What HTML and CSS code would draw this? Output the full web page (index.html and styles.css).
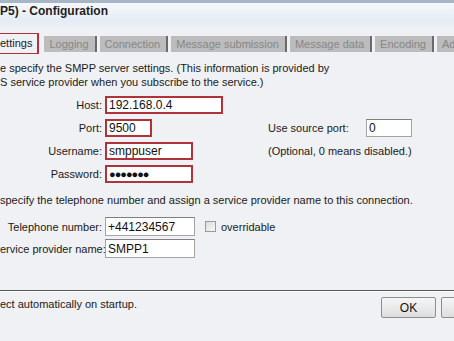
FILE: index.html
```html
<!DOCTYPE html>
<html>
<head>
<title>SMPP Configuration</title>
<link rel="stylesheet" href="styles.css">
</head>
<body>
  <div id="frame">
    <div id="titlebar">P5) - Configuration</div>
    <div id="tabs">
      <span class="tab active">ettings</span>
      <span class="tab">Logging</span>
      <span class="tab">Connection</span>
      <span class="tab">Message submission</span>
      <span class="tab">Message data</span>
      <span class="tab">Encoding</span>
      <span class="tab">Ad</span>
    </div>
    <div id="panel">
      <p class="intro">e specify the SMPP server settings. (This information is provided by<br/>
      S service provider when you subscribe to the service.)</p>
      <div class="form server">
        <label class="lbl">Host:</label>
        <div class="field"><input type="text" class="marked w-host" value="192.168.0.4"/></div>
        <span></span><span></span>

        <label class="lbl">Port:</label>
        <div class="field"><input type="text" class="marked w-port" value="9500"/></div>
        <label class="lbl2">Use source port:</label>
        <div class="field"><input type="text" class="w-src" value="0"/></div>

        <label class="lbl">Username:</label>
        <div class="field"><input type="text" class="marked w-user" value="smppuser"/></div>
        <span class="note">(Optional, 0 means disabled.)</span>

        <label class="lbl">Password:</label>
        <div class="field"><input type="text" class="marked w-user pass" value="&#9679;&#9679;&#9679;&#9679;&#9679;&#9679;&#9679;"/></div>
        <span></span><span></span>
      </div>
      <p class="intro second">specify the telephone number and assign a service provider name to this connection.</p>
      <div class="form phone">
        <label class="lbl">Telephone number:</label>
        <div class="field"><input type="text" class="w-tel" value="+441234567"/>
          <span class="check"><span class="box"></span>overridable</span>
        </div>
        <label class="lbl">ervice provider name:</label>
        <div class="field"><input type="text" class="w-tel" value="SMPP1"/></div>
      </div>
    </div>
    <div id="footer">
      <span class="auto">ect automatically on startup.</span>
      <span class="buttons">
        <button>OK</button><button></button>
      </span>
    </div>
  </div>
</body>
</html>
```

FILE: styles.css
```css
html, body {
  margin: 0;
  height: 100%;
  overflow: hidden;
}
body {
  background-color: #f0f1f4;
  font-family: "Liberation Sans", Arial, sans-serif;
  font-size: 11px;
  color: #1a1a1a;
}
#frame {
  border-top: 3px solid #a7b6c6;
  box-sizing: border-box;
  height: 100%;
  display: flex;
  flex-direction: column;
}
#titlebar {
  height: 19px;
  padding: 1px 0 5px 0;
  font-weight: bold;
  font-size: 12px;
  background: linear-gradient(#f6f8fb, #e6ecf5 70%, #edf0f6);
  color: #1e1e1e;
  white-space: nowrap;
}
#tabs {
  display: flex;
  align-items: center;
  margin-top: 5px;
  height: 21px;
  white-space: nowrap;
  overflow: hidden;
}
.tab {
  background-color: #bcbcbc;
  color: #878787;
  font-size: 11px;
  padding: 1px 6px 1px 5px;
  margin-left: 3px;
  border-right: 2px solid #6a6a6a;
  line-height: 14px;
}
.tab.active {
  background-color: #f0f1f4;
  color: #1a1a1a;
  margin-left: 0;
  margin-right: 2px;
  padding: 2px 5px 3px 0;
  border: 2px solid #b2323c;
  border-left: none;
}
#panel {
  flex-grow: 1;
}
.intro {
  margin: 7px 0 0 0;
  line-height: 14px;
  white-space: nowrap;
}
.intro.second {
  margin-top: 10px;
}
.form {
  display: grid;
  grid-template-columns: 102px 160px 95px auto;
  column-gap: 3px;
  align-items: center;
  white-space: nowrap;
}
.server {
  margin-top: 7px;
  row-gap: 5px;
}
.phone {
  grid-template-columns: 102px auto;
  margin-top: 10px;
  row-gap: 3px;
}
.lbl {
  text-align: right;
}
.note {
  grid-column: 3 / 5;
}
.field {
  display: flex;
  align-items: center;
}
input {
  font-family: "Liberation Sans", Arial, sans-serif;
  font-size: 12px;
  color: #111;
  height: 16px;
  padding: 0 2px;
  margin: 0;
  border: 1px solid #a3a3a3;
  border-top-color: #7f7f7f;
  background: #fff;
  box-sizing: content-box;
}
input.marked {
  border: 2px solid #b2323c;
  height: 14px;
}
.w-host { width: 110px; }
.w-port { width: 39px; }
.w-user { width: 80px; }
.w-src { width: 40px; }
.w-tel { width: 84px; height: 17px; }
.pass {
  font-size: 11px;
  letter-spacing: -1px;
}
.check {
  display: flex;
  align-items: center;
  margin-left: 10px;
}
.box {
  display: inline-block;
  width: 9px;
  height: 9px;
  border: 1px solid #9a9a9a;
  background: linear-gradient(135deg, #dcdcdc, #f8f8f8);
  margin-right: 5px;
}
#footer {
  flex-shrink: 0;
  height: 50px;
  border-top: 1px solid #555;
  box-shadow: inset 0 1px 0 #fff;
  display: flex;
  justify-content: space-between;
  align-items: flex-start;
}
.auto {
  margin-top: 7px;
}
.buttons {
  margin-top: 6px;
  display: flex;
  gap: 5px;
  margin-right: -42px;
}
button {
  font-family: "Liberation Sans", Arial, sans-serif;
  font-size: 12px;
  width: 55px;
  height: 21px;
  border: 1px solid #8e8e8e;
  border-radius: 2px;
  background: linear-gradient(#f6f6f6, #dedede);
  color: #111;
}
```
